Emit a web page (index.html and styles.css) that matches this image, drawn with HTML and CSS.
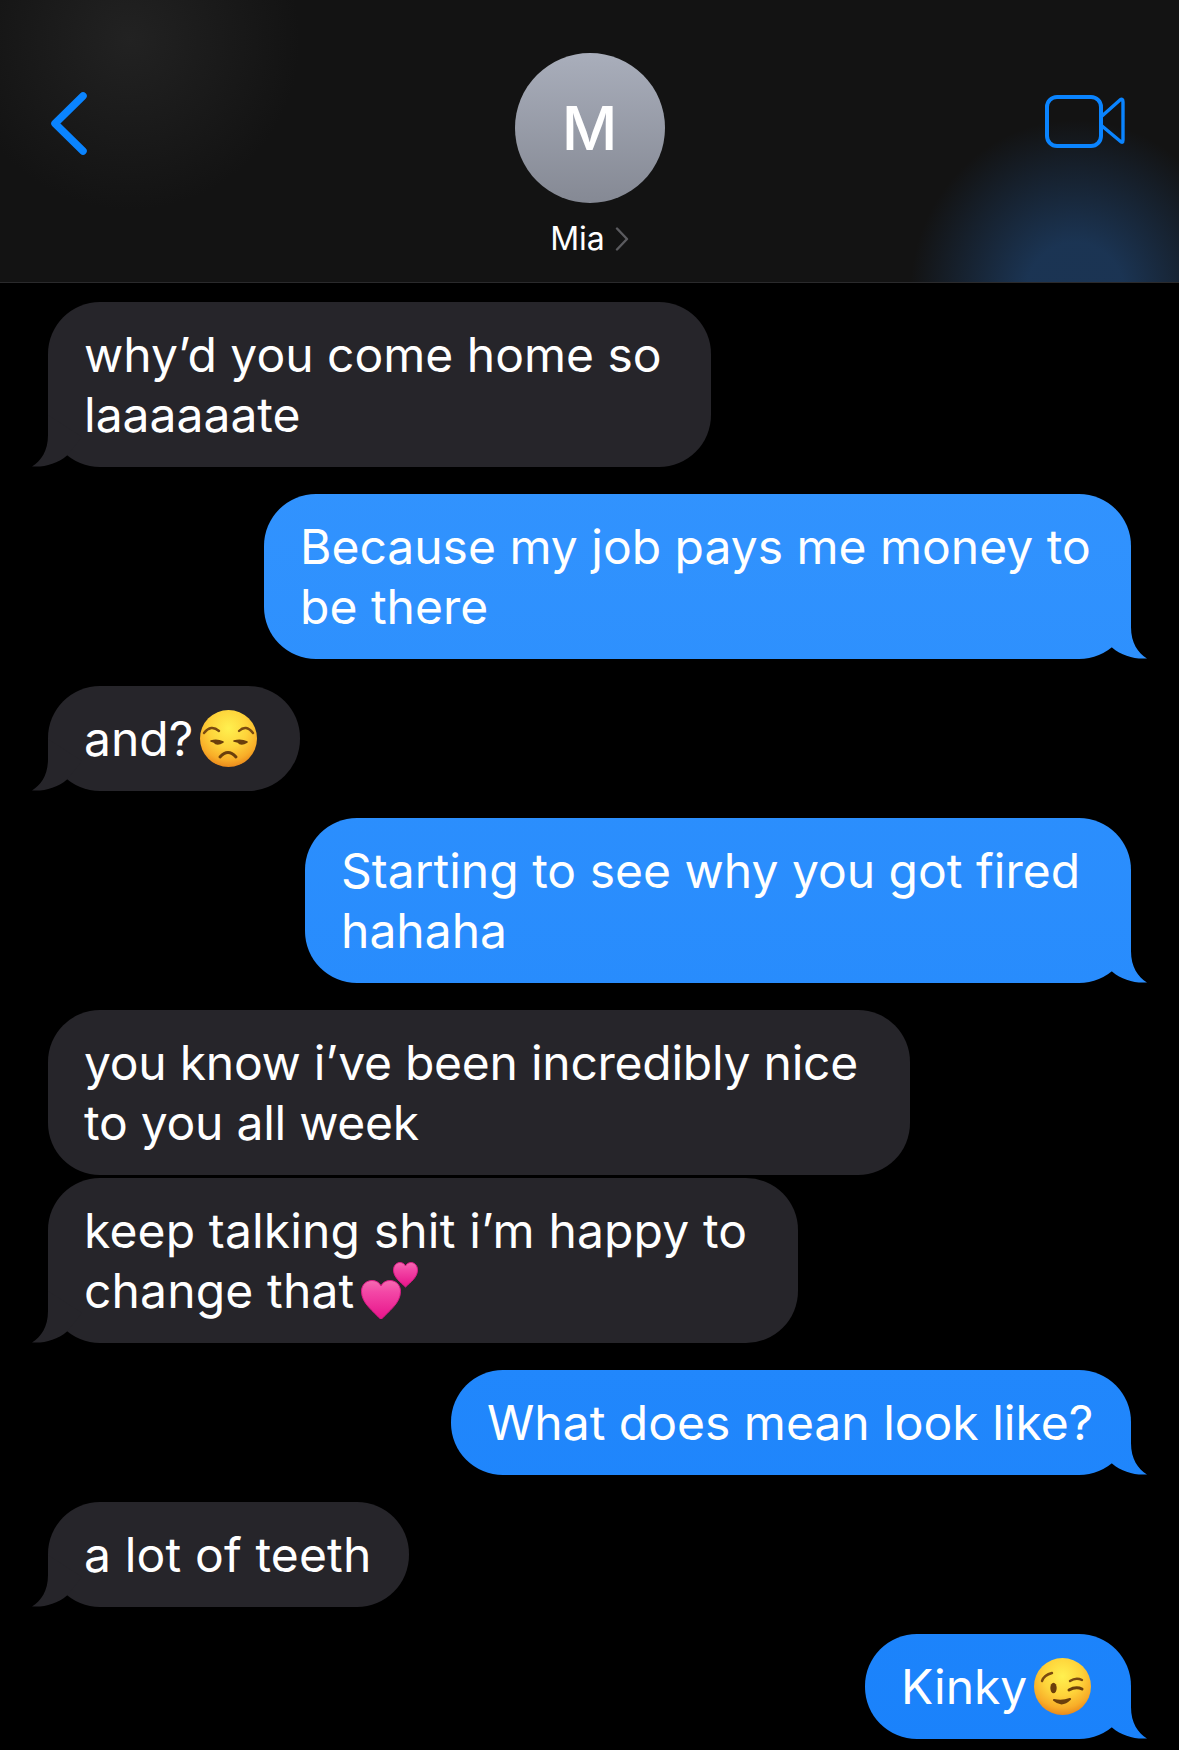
FILE: index.html

```html
<!doctype html>
<html>
<head>
	<meta charset='utf-8'>
	<title>Mia</title>
	<link rel="stylesheet" href="styles.css">
</head>
<body>
<svg class='defs' width='0' height='0'>
	<defs>
		<radialGradient id='face' cx='50%' cy='32%' r='68%'>
			<stop offset='0' stop-color='#fff04f'/>
			<stop offset='.5' stop-color='#fed33a'/>
			<stop offset='.82' stop-color='#f8ad28'/>
			<stop offset='1' stop-color='#ea8a1c'/>
		</radialGradient>
		<linearGradient id='heart' x1='0' y1='0' x2='0' y2='1'>
			<stop offset='0' stop-color='#f56bb2'/>
			<stop offset='.3' stop-color='#f347a6'/>
			<stop offset='1' stop-color='#e7138a'/>
		</linearGradient>
	</defs>
</svg>

<div class='header'>
	<svg class='back' width='38' height='65' viewBox='0 0 38 65'>
		<path d='M33 5 L5 32.5 L33 60' fill='none' stroke='#0a84ff' stroke-width='7.5' stroke-linecap='round' stroke-linejoin='round'/>
	</svg>
	<div class='contact'>
		<div class='avatar'>M</div>
		<div class='name'>Mia<svg class='name-arrow' width='14' height='24' viewBox='0 0 14 24'><path d='M2 1.5 L12 12 L2 22.5' fill='none' stroke='#5b5b5f' stroke-width='2.4' stroke-linecap='round' stroke-linejoin='round'/></svg></div>
	</div>
	<svg class='video' width='80' height='54' viewBox='0 0 80 54'>
		<rect x='2' y='2' width='54' height='49' rx='10' fill='none' stroke='#0a84ff' stroke-width='4'/>
		<path d='M57 21 L75 5 Q78 3 78 7 V45 Q78 49 75 46 L57 31' fill='none' stroke='#0a84ff' stroke-width='3.4' stroke-linejoin='round'/>
	</svg>
</div>

<div class='messages'>
	<div class='msg in tail w-why'>why’d you come home so<br>laaaaaate</div>
	<div class='msg out tail w-job'>Because my job pays me money to<br>be there</div>
	<div class='msg in tail w-and'>and?<svg class='emoji' width='57' height='57' viewBox='0 0 57 57'>
		<circle cx='28.5' cy='28.5' r='28.5' fill='url(#face)'/>
		<path d='M4 23 Q11 14 19 21 M39 21 Q46 14 53 23' fill='none' stroke='#7a4a10' stroke-width='2.4' stroke-linecap='round'/>
		<path d='M11 31 Q17 29 23 32 Q17 36 14 32 Z M34 31 Q41 29 47 32 Q41 36 38 32 Z' fill='#6b3f0c' stroke='#6b3f0c' stroke-width='1.6' stroke-linejoin='round'/>
		<path d='M20 47 Q28 38 36 47' fill='none' stroke='#6b3f0c' stroke-width='3' stroke-linecap='round'/>
	</svg></div>
	<div class='msg out tail w-fired'>Starting to see why you got fired<br>hahaha</div>
	<div class='group'>
		<div class='msg in w-nice'>you know i’ve been incredibly nice<br>to you all week</div>
		<div class='msg in tail w-shit'>keep talking shit i’m happy to<br>change that<svg class='emoji' width='57' height='57' viewBox='0 0 57 57'>
			<path d='M20 57.5 C12 49 0.5 41 0.5 29.5 C0.5 22 6 18.5 11 18.5 C15 18.5 18.5 20.5 20 24 C21.5 20.5 25 18.5 29 18.5 C34 18.5 39.5 22 39.5 29.5 C39.5 41 28 49 20 57.5 Z' fill='url(#heart)' stroke='#d91a85' stroke-width='1'/>
			<path d='M44.5 25 C39.5 20 32.5 15.5 32.5 8 C32.5 3 36 .5 39 .5 C41.5 .5 43.5 2 44.5 4 C45.5 2 47.5 .5 50 .5 C53 .5 56.5 3 56.5 8 C56.5 15.5 49.5 20 44.5 25 Z' fill='url(#heart)' stroke='#d91a85' stroke-width='1'/>
		</svg></div>
	</div>
	<div class='msg out tail w-mean'>What does mean look like?</div>
	<div class='msg in tail w-teeth'>a lot of teeth</div>
	<div class='msg out tail w-kinky'>Kinky<svg class='emoji' width='57' height='57' viewBox='0 0 57 57'>
		<circle cx='28.5' cy='28.5' r='28.5' fill='url(#face)'/>
		<path d='M8 23 Q10 17 18 15 M36 23 Q42 19 48 22' fill='none' stroke='#7a4a10' stroke-width='2.4' stroke-linecap='round'/>
		<ellipse cx='19.5' cy='30' rx='3.2' ry='5.2' fill='#6b3f0c'/>
		<path d='M35 32 Q42 28 48 31' fill='none' stroke='#6b3f0c' stroke-width='3' stroke-linecap='round'/>
		<path d='M20 42 Q28 49 36 41 Q28 44 20 42 Z' fill='#6b3f0c' stroke='#6b3f0c' stroke-width='2.2' stroke-linejoin='round'/>
	</svg></div>
</div>
</body>
</html>
```

FILE: styles.css

```css
*{margin:0;padding:0;box-sizing:border-box;}
html,body{background:#000;}
body{width:1179px;height:1750px;overflow:hidden;font-family:Inter,"Liberation Sans",sans-serif;color:#fff;}
.defs{display:block;height:0;}

.header{height:283px;border-bottom:1px solid #2a2a2c;display:grid;grid-template-columns:1fr auto 1fr;padding:53px 50px 0;
  background:
    radial-gradient(ellipse 165px 175px at 1075px 295px,rgba(30,66,110,.7) 30%,rgba(30,66,110,0)),
    radial-gradient(ellipse 170px 170px at 130px 40px,#222,rgba(34,34,34,0)),
    #131313;}
.back{margin-top:38px;}
.video{margin:42px 4px 0 0;justify-self:end;}
.contact{display:flex;flex-direction:column;align-items:center;}
.avatar{width:150px;height:150px;border-radius:50%;background:linear-gradient(#a9aebb,#858994);font-size:61px;font-weight:500;line-height:150px;text-align:center;}
.name{margin-top:17px;font-size:32px;line-height:38px;display:flex;align-items:center;gap:10px;}

.messages{display:flex;flex-direction:column;gap:27px;padding:19px 48px 0;}
.group{display:flex;flex-direction:column;gap:3px;}
.msg{position:relative;padding:23px 0 22px 36px;border-radius:52px;font-size:48px;line-height:60px;white-space:nowrap;}
.in{background:#26252a;}
.out{align-self:flex-end;background:linear-gradient(#3a99ff,#1a82fb) fixed;}

/* bubble widths, ios wraps them wider than the text */
.w-why{width:663px;}
.w-job{width:867px;}
.w-and{width:252px;}
.w-fired{width:826px;}
.w-nice{width:862px;letter-spacing:-.25px;}
.w-shit{width:750px;letter-spacing:.15px;}
.w-mean{width:680px;}
.w-teeth{width:361px;letter-spacing:.15px;}
.w-kinky{width:266px;}

.tail::after{content:'';position:absolute;bottom:0;width:56px;height:52px;background:inherit;}
.in.tail::after{left:-16px;clip-path:path('M16 0 V20 C16 36 9 46 0 51.4 C12 52.4 25 49 35 40.5 L50 22 Z');}
.out.tail::after{right:-16px;clip-path:path('M40 0 V20 C40 36 47 46 56 51.4 C44 52.4 31 49 21 40.5 L6 22 Z');}

.emoji{display:inline-block;vertical-align:-11px;margin-left:6.5px;}
```
